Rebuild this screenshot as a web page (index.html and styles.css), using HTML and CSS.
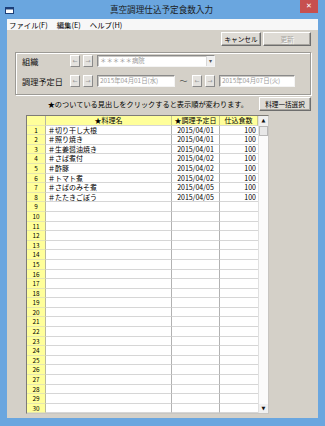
FILE: index.html
```html
<!DOCTYPE html>
<html lang="ja">
<head>
<meta charset="utf-8">
<title>真空調理仕込予定食数入力</title>
<link rel="stylesheet" href="styles.css">
</head>
<body>
<div class="window">
  <div class="titlebar">
    <svg class="app-icon" width="9" height="7" viewBox="0 0 9 7"><rect x="0.5" y="0.5" width="8" height="6" fill="#fff" stroke="#1d3f78"/><rect x="0.5" y="0.5" width="8" height="2" fill="#1d3f78"/></svg>
    <div class="title">真空調理仕込予定食数入力</div>
    <div class="close">✕</div>
  </div>
  <div class="menubar">
    <span>ファイル(<u>F</u>)</span>
    <span>編集(<u>E</u>)</span>
    <span>ヘルプ(<u>H</u>)</span>
  </div>
  <div class="client">
    <div class="toolbar">
      <div class="btn btn-cancel">キャンセル</div>
      <div class="btn btn-update disabled">更新</div>
    </div>
    <div class="group">
      <div class="row">
        <div class="label">組織</div>
        <div class="arrow">←</div>
        <div class="arrow">→</div>
        <div class="combo"><span class="field-text">＊＊＊＊＊病院</span><span class="drop">▾</span></div>
      </div>
      <div class="row">
        <div class="label">調理予定日</div>
        <div class="arrow">←</div>
        <div class="arrow">→</div>
        <div class="datebox date-from"><span class="field-text">2015年04月01日(水)</span></div>
        <div class="tilde">〜</div>
        <div class="arrow">←</div>
        <div class="arrow">→</div>
        <div class="datebox date-to"><span class="field-text">2015年04月07日(火)</span></div>
      </div>
    </div>
    <div class="hint-row">
      <div class="hint">★のついている見出しをクリックすると表示順が変わります。</div>
      <div class="btn btn-bulk">料理一括選択</div>
    </div>
    <div class="grid">
      <div class="table">
        <div class="hd num"></div><div class="hd">★料理名</div><div class="hd">★調理予定日</div><div class="hd">仕込食数</div>
        <div class="num">1</div><div class="name">＃切り干し大根</div><div class="date">2015/04/01</div><div class="qty">100</div>
        <div class="num">2</div><div class="name">＃照り焼き</div><div class="date">2015/04/01</div><div class="qty">100</div>
        <div class="num">3</div><div class="name">＃生姜醤油焼き</div><div class="date">2015/04/01</div><div class="qty">100</div>
        <div class="num">4</div><div class="name">＃さば煮付</div><div class="date">2015/04/02</div><div class="qty">100</div>
        <div class="num">5</div><div class="name">＃酢豚</div><div class="date">2015/04/02</div><div class="qty">100</div>
        <div class="num">6</div><div class="name">＃トマト煮</div><div class="date">2015/04/02</div><div class="qty">100</div>
        <div class="num">7</div><div class="name">＃さばのみそ煮</div><div class="date">2015/04/05</div><div class="qty">100</div>
        <div class="num">8</div><div class="name">＃たたきごぼう</div><div class="date">2015/04/05</div><div class="qty">100</div>
        <div class="num">9</div><div class="name"></div><div class="date"></div><div class="qty"></div>
        <div class="num">10</div><div class="name"></div><div class="date"></div><div class="qty"></div>
        <div class="num">11</div><div class="name"></div><div class="date"></div><div class="qty"></div>
        <div class="num">12</div><div class="name"></div><div class="date"></div><div class="qty"></div>
        <div class="num">13</div><div class="name"></div><div class="date"></div><div class="qty"></div>
        <div class="num">14</div><div class="name"></div><div class="date"></div><div class="qty"></div>
        <div class="num">15</div><div class="name"></div><div class="date"></div><div class="qty"></div>
        <div class="num">16</div><div class="name"></div><div class="date"></div><div class="qty"></div>
        <div class="num">17</div><div class="name"></div><div class="date"></div><div class="qty"></div>
        <div class="num">18</div><div class="name"></div><div class="date"></div><div class="qty"></div>
        <div class="num">19</div><div class="name"></div><div class="date"></div><div class="qty"></div>
        <div class="num">20</div><div class="name"></div><div class="date"></div><div class="qty"></div>
        <div class="num">21</div><div class="name"></div><div class="date"></div><div class="qty"></div>
        <div class="num">22</div><div class="name"></div><div class="date"></div><div class="qty"></div>
        <div class="num">23</div><div class="name"></div><div class="date"></div><div class="qty"></div>
        <div class="num">24</div><div class="name"></div><div class="date"></div><div class="qty"></div>
        <div class="num">25</div><div class="name"></div><div class="date"></div><div class="qty"></div>
        <div class="num">26</div><div class="name"></div><div class="date"></div><div class="qty"></div>
        <div class="num">27</div><div class="name"></div><div class="date"></div><div class="qty"></div>
        <div class="num">28</div><div class="name"></div><div class="date"></div><div class="qty"></div>
        <div class="num">29</div><div class="name"></div><div class="date"></div><div class="qty"></div>
        <div class="num">30</div><div class="name"></div><div class="date"></div><div class="qty"></div>
      </div>
      <div class="scrollbar">
        <div class="sb-btn">▲</div>
        <div class="sb-thumb"></div>
        <div class="sb-track"></div>
        <div class="sb-btn">▼</div>
      </div>
    </div>
  </div>
</div>
</body>
</html>
```
FILE: styles.css
```css
* { box-sizing: border-box; margin: 0; padding: 0; }
body {
  margin: 0;
  width: 325px;
  height: 426px;
  overflow: hidden;
  font-family: "Noto Sans CJK JP", "Noto Sans", sans-serif;
  color: #000;
}
.window {
  width: 325px;
  height: 426px;
  background: #6aa6df;
  display: flex;
  flex-direction: column;
}
.titlebar {
  height: 19px;
  display: grid;
  grid-template-columns: 1fr auto 1fr;
  align-items: center;
  padding-left: 5px;
  padding-right: 7px;
}
.app-icon { justify-self: start; margin-top: 1px; }
.title {
  font-size: 8.6px;
  line-height: 19px;
  color: #1b1b1b;
}
.close {
  justify-self: end;
  align-self: start;
  width: 18px;
  height: 13px;
  background: #c7504f;
  color: #fff;
  font-size: 7px;
  font-weight: bold;
  line-height: 13px;
  text-align: center;
  font-family: "DejaVu Sans", sans-serif;
}
.menubar {
  margin: 0 7px;
  height: 11px;
  background: #f7f7f7;
  display: flex;
  align-items: center;
  gap: 9px;
  padding-left: 2px;
  font-size: 7.4px;
  line-height: 11px;
}
.menubar u { text-decoration: none; }
.client {
  flex: 1;
  margin: 0 7px 8px;
  background: #d4d0c8;
  padding-top: 2px;
  display: flex;
  flex-direction: column;
}
.toolbar {
  display: flex;
  justify-content: flex-end;
  gap: 2px;
  padding-right: 7px;
}
.btn {
  height: 14px;
  font-size: 6.6px;
  line-height: 12px;
  text-align: center;
  background: #dedbd5;
  border: 1px solid;
  border-color: #fff #6e6e6e #6e6e6e #fff;
  box-shadow: inset -1px -1px 0 #a8a59f;
}
.btn-cancel { width: 40px; }
.btn-update { width: 48px; }
.btn-bulk { width: 52px; }
.disabled { color: #a6a49f; text-shadow: 1px 1px 0 #fff; }
.group {
  margin: 6px 7px 0 8px;
  border: 1px solid #9c9a95;
  box-shadow: inset 1px 1px 0 #fff, 1px 1px 0 #fff;
  padding: 2px 0 7px 6px;
  display: flex;
  flex-direction: column;
  gap: 8px;
}
.row {
  height: 12px;
  display: flex;
  align-items: center;
}
.label {
  width: 48px;
  font-size: 8.2px;
  line-height: 12px;
  color: #111;
}
.arrow {
  width: 10px;
  height: 12px;
  margin-right: 3px;
  background: #e4e2de;
  border: 1px solid;
  border-color: #fff #8a8a8a #8a8a8a #fff;
  color: #9a9a9a;
  font-size: 6px;
  line-height: 10px;
  text-align: center;
  font-family: "DejaVu Sans", sans-serif;
}
.arrow + .combo, .arrow + .datebox { margin-left: 1px; }
.combo, .datebox {
  height: 12px;
  background: #fff;
  border: 1px solid;
  border-color: #8a8a8a #f4f4f4 #f4f4f4 #8a8a8a;
  box-shadow: inset 1px 1px 0 #c8c6c2;
  display: flex;
  align-items: center;
  overflow: hidden;
}
.combo { width: 118px; justify-content: space-between; }
.date-from { width: 78px; }
.date-to { width: 76px; margin-left: 1px; }
.field-text {
  font-size: 6.4px;
  line-height: 10px;
  color: #9a9a9a;
  padding-left: 2px;
  white-space: nowrap;
}
.drop {
  width: 8px;
  height: 10px;
  font-size: 6px;
  line-height: 10px;
  text-align: center;
  color: #555;
  background: #f0f0f0;
  border-left: 1px solid #d8d8d8;
  font-family: "DejaVu Sans", sans-serif;
}
.tilde {
  width: 17px;
  font-size: 8px;
  line-height: 12px;
  text-align: center;
  color: #555;
}
.hint-row {
  margin-top: 2px;
  height: 14px;
  display: flex;
  justify-content: flex-end;
  align-items: center;
  gap: 11px;
  padding-right: 7px;
}
.hint {
  font-size: 7.2px;
  line-height: 14px;
  white-space: nowrap;
}
.grid {
  margin: 4px 0 0 19px;
  width: 243px;
  display: flex;
  border: 1px solid #7d7b77;
  border-right-color: #c8c6c2;
  border-bottom-color: #c8c6c2;
  background: #fff;
}
.table {
  display: grid;
  grid-template-columns: 19px 126px 48px 38px;
  grid-auto-rows: 9.6px;
  font-size: 7px;
  line-height: 9px;
}
.table > div {
  border-bottom: 1px solid #d6d6d6;
  white-space: nowrap;
  overflow: hidden;
}
.hd {
  background: #ffff9a;
  text-align: center;
  border-right: 1px solid #c9c98a;
}
.num {
  background: #ffff9a;
  text-align: center;
  font-size: 6.4px;
  border-right: 1px solid #b8b8a0;
  border-bottom-color: #e6e6b0 !important;
}
.name { padding-left: 2px; border-right: 1px solid #b2b2b2; }
.date { text-align: center; border-right: 1px solid #b2b2b2; }
.qty { text-align: right; padding-right: 2px; }
.scrollbar {
  width: 10px;
  display: flex;
  flex-direction: column;
  background: #f2f2f2;
  border-left: 1px solid #e0e0e0;
}
.sb-btn {
  height: 9.6px;
  font-size: 5px;
  line-height: 9px;
  text-align: center;
  color: #111;
  font-family: "DejaVu Sans", sans-serif;
  background: #f0f0f0;
}
.sb-thumb {
  height: 10px;
  background: #e8e8e8;
  border: 1px solid #b8b8b8;
}
.sb-track { flex: 1; background: #fbfbfb; }
```
